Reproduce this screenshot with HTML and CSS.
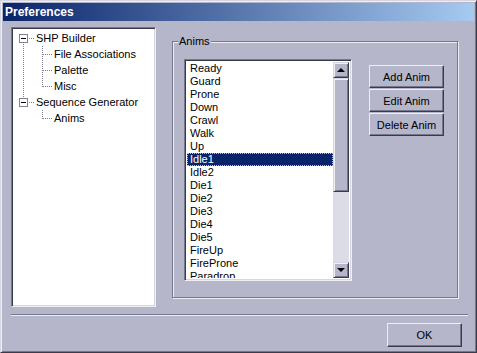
FILE: index.html
```html
<!DOCTYPE html>
<html lang="en">
<head>
  <meta charset="UTF-8" />
  <title>Preferences</title>
  <link rel="stylesheet" href="styles.css">
</head>
<body>
  <div class="window">
    <div class="titlebar">Preferences</div>
    <div class="client">
      <div class="main">
        <div class="tree">
          <svg class="tree-lines" width="140" height="100">
            <g stroke="#808094" stroke-dasharray="1 1" shape-rendering="crispEdges">
              <line x1="9.5" y1="14" x2="9.5" y2="68" />
              <line x1="15" y1="8.5" x2="21" y2="8.5" />
              <line x1="15" y1="72.5" x2="21" y2="72.5" />
              <line x1="28.5" y1="16" x2="28.5" y2="57" />
              <line x1="29" y1="24.5" x2="39" y2="24.5" />
              <line x1="29" y1="40.5" x2="39" y2="40.5" />
              <line x1="29" y1="56.5" x2="39" y2="56.5" />
              <line x1="28.5" y1="80" x2="28.5" y2="89" />
              <line x1="29" y1="88.5" x2="39" y2="88.5" />
            </g>
            <g fill="#fff" stroke="#808094" shape-rendering="crispEdges">
              <rect x="5.5" y="4.5" width="8" height="8" />
              <rect x="5.5" y="68.5" width="8" height="8" />
            </g>
            <g stroke="#000" shape-rendering="crispEdges">
              <line x1="7" y1="8.5" x2="12" y2="8.5" />
              <line x1="7" y1="72.5" x2="12" y2="72.5" />
            </g>
          </svg>
          <div class="node">SHP Builder</div>
          <div class="node child">File Associations</div>
          <div class="node child">Palette</div>
          <div class="node child">Misc</div>
          <div class="node">Sequence Generator</div>
          <div class="node child">Anims</div>
        </div>

        <div class="group">
          <span class="legend">Anims</span>
          <div class="listbox">
            <ul class="items">
              <li>Ready</li>
              <li>Guard</li>
              <li>Prone</li>
              <li>Down</li>
              <li>Crawl</li>
              <li>Walk</li>
              <li>Up</li>
              <li class="selected">Idle1</li>
              <li>Idle2</li>
              <li>Die1</li>
              <li>Die2</li>
              <li>Die3</li>
              <li>Die4</li>
              <li>Die5</li>
              <li>FireUp</li>
              <li>FireProne</li>
              <li>Paradrop</li>
            </ul>
            <div class="scrollbar">
              <div class="sb-btn"><span class="arrow up"></span></div>
              <div class="sb-thumb"></div>
              <div class="sb-track"></div>
              <div class="sb-btn"><span class="arrow down"></span></div>
            </div>
          </div>
          <div class="actions">
            <button class="btn">Add Anim</button>
            <button class="btn">Edit Anim</button>
            <button class="btn">Delete Anim</button>
          </div>
        </div>
      </div>

      <div class="separator"></div>

      <div class="footer">
        <button class="btn ok">OK</button>
      </div>
    </div>
  </div>
</body>
</html>
```

FILE: styles.css
```css
:root {
  --face: #b6b6ca;
  --light: #d6d6e2;
  --hilite: #eeeef4;
  --shadow: #76768c;
  --dark: #3a3a4a;
  --select: #0a246a;
  --track: #dcdce6;
}

body {
  margin: 0;
  font-family: 'Liberation Sans', Arial, sans-serif;
  font-size: 11px;
  color: #000;
  background: var(--face);
}

.window {
  width: 477px;
  height: 353px;
  box-sizing: border-box;
  background: var(--face);
  border: 1px solid;
  border-color: var(--light) var(--dark) var(--dark) var(--light);
  box-shadow: inset 1px 1px 0 var(--hilite), inset -1px -1px 0 var(--shadow);
  padding: 2px;
  display: flex;
  flex-direction: column;
}

.titlebar {
  height: 18px;
  line-height: 18px;
  padding-left: 2px;
  color: #fff;
  font-weight: bold;
  font-size: 12px;
  background: linear-gradient(to right, #0a246a, #a6caf0);
}

.client {
  flex: 1;
  padding: 6px 12px 0 8px;
  display: flex;
  flex-direction: column;
}

.main {
  display: flex;
  gap: 16px;
}

/* sunken white panels */
.tree,
.listbox {
  background: #fff;
  border: 1px solid;
  border-color: var(--shadow) var(--hilite) var(--hilite) var(--shadow);
  box-shadow: inset 1px 1px 0 var(--dark), inset -1px -1px 0 var(--light);
  box-sizing: border-box;
}

.tree {
  position: relative;
  width: 145px;
  height: 280px;
  padding: 2px;
}

.tree-lines {
  position: absolute;
  left: 2px;
  top: 2px;
}

.node {
  height: 16px;
  line-height: 16px;
  padding-left: 22px;
  white-space: nowrap;
}
.node.child { padding-left: 40px; }

.group {
  position: relative;
  width: 286px;
  height: 257px;
  margin-top: 14px;
  border: 1px solid var(--shadow);
  box-shadow: inset 1px 1px 0 var(--hilite), 1px 1px 0 var(--hilite);
  display: flex;
  align-items: flex-start;
  padding: 17px 0 0 11px;
  box-sizing: border-box;
}

.legend {
  position: absolute;
  left: 5px;
  top: -7px;
  padding: 0 1px 0 1px;
  line-height: 13px;
  background: var(--face);
}

.listbox {
  width: 168px;
  height: 222px;
  padding: 2px;
  display: flex;
}

.items {
  list-style: none;
  margin: 0;
  padding: 0;
  flex: 1;
  overflow: hidden;
}
.items li {
  height: 13px;
  line-height: 13px;
  padding-left: 3px;
}
.items li.selected {
  background: var(--select);
  color: #fff;
  outline: 1px dotted #c8c8a0;
  outline-offset: -1px;
}

.scrollbar {
  width: 16px;
  display: flex;
  flex-direction: column;
  background: var(--track);
}

.sb-btn,
.sb-thumb {
  background: var(--face);
  border: 1px solid;
  border-color: var(--light) var(--dark) var(--dark) var(--light);
  box-shadow: inset 1px 1px 0 var(--hilite), inset -1px -1px 0 var(--shadow);
  box-sizing: border-box;
}
.sb-btn {
  height: 16px;
  display: flex;
  align-items: center;
  justify-content: center;
}
.sb-thumb { height: 114px; }
.sb-track { flex: 1; }

.arrow {
  width: 0;
  height: 0;
  border-left: 4px solid transparent;
  border-right: 4px solid transparent;
}
.arrow.up { border-bottom: 4px solid #000; }
.arrow.down { border-top: 4px solid #000; }

.actions {
  display: flex;
  flex-direction: column;
  gap: 1px;
  margin: 6px 0 0 17px;
}

.btn {
  width: 75px;
  height: 23px;
  padding: 0;
  font-family: inherit;
  font-size: 11px;
  color: #000;
  background: var(--face);
  border: 1px solid;
  border-color: var(--hilite) var(--dark) var(--dark) var(--hilite);
  box-shadow: inset -1px -1px 0 var(--shadow);
}

.separator {
  height: 1px;
  margin-top: 7px;
  margin-right: -6px;
  background: var(--shadow);
  border-bottom: 1px solid var(--hilite);
}

.footer {
  display: flex;
  justify-content: flex-end;
  padding-top: 7px;
}
.btn.ok { height: 24px; }
```
